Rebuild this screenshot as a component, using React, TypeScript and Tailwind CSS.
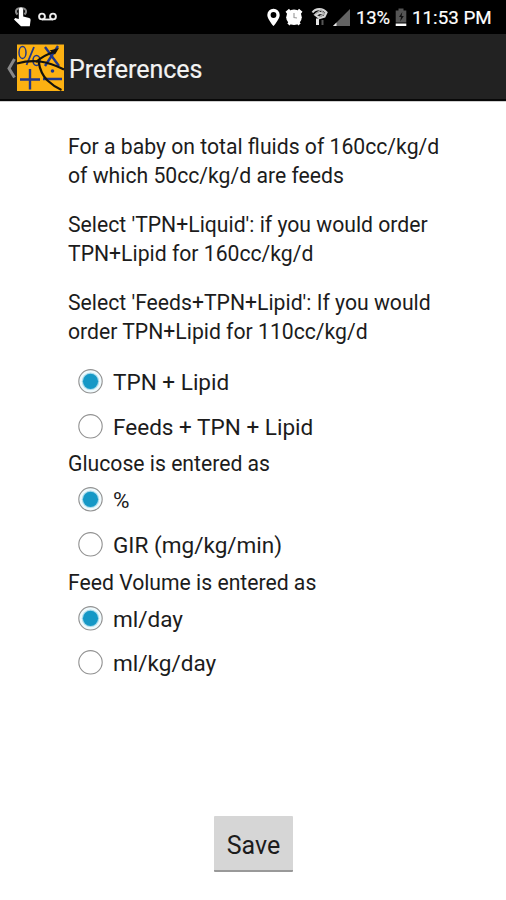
import React from 'react';

function StatusBar() {
  return (
    <div className="flex h-[34px] items-center bg-black text-white">
      <svg className="h-[34px] w-[256px] shrink-0" viewBox="0 0 256 34" fill="none">
        <path d="M17.500 14.500c-3-3-1.500-6.500 3.500-6.500s6.500 3.500 3.500 6.500" stroke="#8a8a8a" strokeWidth="2" />
        <path d="M18.800 9.700q.2-2.200 2.200-2.200t2.200 2.200v6.800l6 1.400q1.600.5 1.400 2l-.8 6.300h-8.800l-7-6.700 1.200-1.400 3.600.9z" fill="#fff" />
        <circle cx="42" cy="16.500" r="2.900" stroke="#eee" strokeWidth="1.900" />
        <circle cx="53" cy="16.500" r="2.900" stroke="#eee" strokeWidth="1.900" />
        <path d="M42 19.500h11" stroke="#eee" strokeWidth="1.800" />
      </svg>
      <svg className="h-[34px] w-[100px] shrink-0" viewBox="256 0 100 34" fill="none">
        <path d="M273.500 8.800a6.100 6.100 0 0 1 6.200 6.100c0 4-6.200 11.100-6.200 11.100s-6.200-7.100-6.200-11.100a6.100 6.100 0 0 1 6.200-6.100zm0 3.300a2.900 2.900 0 1 0 0 5.800 2.900 2.900 0 0 0 0-5.800z" fill="#fff" fillRule="evenodd" />
        <path d="M286.500 13l3.500-3M301.500 13l-3.500-3M288.500 24.500l2-2.500M299.500 24.500l-2-2.500" stroke="#fff" strokeWidth="3" />
        <circle cx="294" cy="17.300" r="7.800" fill="#fff" />
        <path d="M294 13v4.500l3 .5" stroke="#999" strokeWidth="1.100" />
        <path d="M312.500 12.500c3-4.500 10.500-4.500 14 0l-2 4-5 1.500-4-3 4-2 5 .5" stroke="#d6d6d6" strokeWidth="2.200" />
        <path d="M315 14l6-4 3 4-5 3" stroke="#aaa" strokeWidth="1.500" />
        <path d="M317.500 18.500V25" stroke="#e4e4e4" strokeWidth="3" />
        <path d="M322.500 20v5" stroke="#555" strokeWidth="2" />
        <path d="M350 9v17h-17z" fill="#636363" />
        <path d="M336.500 22.500V26H333z" fill="#eee" />
      </svg>
      <span className="mt-[3px] w-[38px] whitespace-nowrap text-[18.500px] tracking-[-0.2px] [-webkit-text-stroke:0.2px_white]">13%</span>
      <svg className="h-[34px] w-[18px] shrink-0" viewBox="394 0 18 34" fill="none">
        <path d="M398.500 8.500h5v2h2.800v12h-10.600v-12h2.800z" fill="#555" />
        <path d="M402.300 12l-3.300 5h2l-.8 4.500 3.600-5.500h-2.200z" fill="#111" />
        <path d="M395.700 23.500h10.600v2.500h-10.600z" fill="#fff" />
      </svg>
      <span className="mt-[3px] whitespace-nowrap text-[18.800px] [-webkit-text-stroke:0.2px_white]">11:53 PM</span>
    </div>
  );
}

function AppIcon() {
  return (
    <svg className="h-[48px] w-[66px] shrink-0" viewBox="0 44 66 48" fill="none">
      <path d="M14.500 59L9 68.500l5.500 9" stroke="#888" strokeWidth="3" />
      <rect x="17" y="44.500" width="47" height="46.500" fill="#fcb112" />
      <g stroke="#20378c">
        <ellipse cx="22.500" cy="52.500" rx="3.500" ry="6" strokeWidth="1.500" />
        <path d="M34 47L26.500 65" strokeWidth="1.800" />
        <ellipse cx="36.500" cy="60.500" rx="3.500" ry="5" strokeWidth="1.500" />
        <path d="M45 47l14 19M58 46L45 66" strokeWidth="2.400" />
        <path d="M20 79.500h20M30 69v20.500M43 79h19" strokeWidth="2.400" />
      </g>
      <circle cx="52.500" cy="71" r="1.800" fill="#20378c" />
      <g stroke="#15130d">
        <path d="M17 63.500q12-3.500 23-2t24 8" strokeWidth="2.200" />
        <path d="M36 62q8-7 18-10" strokeWidth="2.200" />
        <path d="M38.500 61q2 13 9 19.500t14 9.500" strokeWidth="2.200" />
      </g>
      <path d="M59 48l-4 6.500-5.500-4z" fill="#15130d" />
    </svg>
  );
}

function Header() {
  return (
    <header className="flex h-[67px] items-center border-b-2 border-[#080808] bg-[#222] pt-[2px]">
      <AppIcon />
      <h1 className="ml-[3px] mt-[5px] whitespace-nowrap text-[25px] leading-[30px] text-[#f3f3f3] [-webkit-text-stroke:0.2px_#f3f3f3]">Preferences</h1>
    </header>
  );
}

function Option({ label, checked = false }: { label: string; checked?: boolean }) {
  return (
    <label className="flex h-[44.700px] items-center gap-[10px] pl-[10px] text-[22.550px]">
      <svg className="size-[25px] shrink-0" viewBox="0 0 25 25">
        <circle cx="12.500" cy="12.300" r="11.700" fill={checked ? '#f0fafd' : '#fff'} stroke="#929292" strokeWidth="1.100" />
        {checked && <circle cx="12.500" cy="12.300" r="8.700" fill="#a9dcec" />}
        {checked && <circle cx="12.500" cy="12.300" r="7.600" fill="#1598c6" />}
      </svg>
      <span className="whitespace-nowrap pt-[3px]">{label}</span>
    </label>
  );
}

export default function App() {
  return (
    <div className="flex h-[900px] w-[506px] flex-col overflow-hidden bg-white font-['Roboto',sans-serif] text-[#1c1c1c]">
      <StatusBar />
      <Header />
      <main className="flex flex-1 flex-col border-t border-[#cfcfcf] pl-[68px] text-[21.180px]">
        <div className="flex h-[257px] flex-col gap-[21px] whitespace-nowrap pt-[31px] leading-[28.500px]">
          <p>For a baby on total fluids of 160cc/kg/d<br />of which 50cc/kg/d are feeds</p>
          <p>Select 'TPN+Liquid': if you would order<br />TPN+Lipid for 160cc/kg/d</p>
          <p>Select 'Feeds+TPN+Lipid': If you would<br />order TPN+Lipid for 110cc/kg/d</p>
        </div>
        <Option label="TPN + Lipid" checked />
        <Option label="Feeds + TPN + Lipid" />
        <p className="h-[29px] leading-[31px]">Glucose is entered as</p>
        <Option label="%" checked />
        <Option label="GIR (mg/kg/min)" />
        <p className="h-[29px] leading-[31px]">Feed Volume is entered as</p>
        <Option label="ml/day" checked />
        <Option label="ml/kg/day" />
        <button className="mt-[131px] ml-[146px] h-[56px] w-[79px] rounded-[1px] border-b-2 border-[#999] bg-[#d6d6d6] pt-[5px] text-[25px]">Save</button>
      </main>
    </div>
  );
}
